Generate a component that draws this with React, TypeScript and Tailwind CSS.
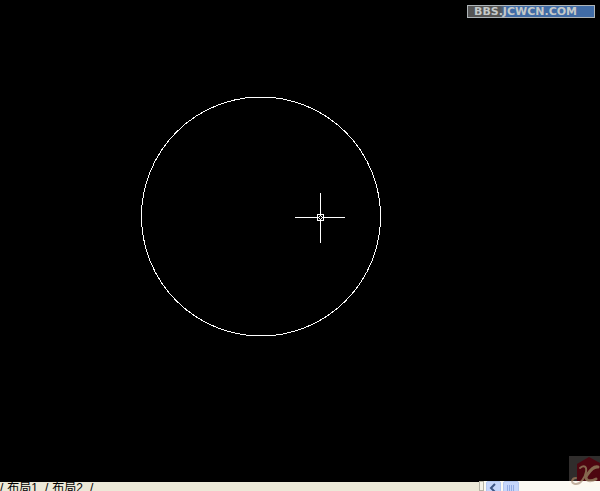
const layouts = ["布局1", "布局2"];

function Watermark() {
  return (
    <svg className="absolute right-0 bottom-1 h-[31px] w-[31px]" viewBox="0 0 31 31" aria-hidden="true">
      <rect width="31" height="25" fill="#302d2c" />
      <path d="M8 8 20 1 31 7V25H8Z" fill="#4d0610" />
      <g fill="none" strokeLinecap="round" stroke="#85684f">
        <path d="M11 12C15 9 18 10 17 16S11 29 6 28 3 22 7 22" strokeWidth="2" />
        <path d="M29 11C24 10 21 15 18 19S19 27 27 23" strokeWidth="3" />
      </g>
      <path d="M0 25H31V31H0Z" fill="#fff9ef" opacity="0.5" />
    </svg>
  );
}

function Drawing() {
  return (
    <svg className="block h-full w-full" role="img" aria-label="Circle with crosshair cursor" shapeRendering="crispEdges" fill="none" stroke="#fff">
      <circle cx="261" cy="216.5" r="119.5" />
      <path d="M320.5 193V243M295 217.5H345" />
      <rect x="317.5" y="214.5" width="6" height="6" fill="#000" />
      <path d="M320 215.5h1M319 216.5h1M321 216.5h1M318 217.5h1M322 217.5h1M319 218.5h1M321 218.5h1M320 219.5h1" />
    </svg>
  );
}

export default function App() {
  return (
    <div className="relative flex h-screen flex-col overflow-hidden bg-black">
      <main className="min-h-0 flex-1">
        <Drawing />
      </main>
      <div className="absolute top-[5px] right-[5px] flex h-[13px] w-32 items-center border border-[#aeb5b8] bg-linear-to-r from-[#555] from-25% to-[#416ca6] to-30% pl-[6px] font-['DejaVu_Sans',sans-serif] text-[11px] leading-none font-bold text-[#c4c9c9]">
        BBS.JCWCN.COM
      </div>
      <footer className="flex h-[10px] shrink-0 bg-[#fbfaf3]">
        <nav className="flex flex-1 border-t border-black bg-[#ece9d8] font-['Liberation_Sans','Noto_Sans_CJK_SC',sans-serif] text-[12px] leading-3 text-black">
          {layouts.map((name) => (
            <button key={name} className="flex h-3 w-[45px] shrink-0 items-start gap-1 whitespace-nowrap">
              <span>/</span>
              <span>{name}</span>
            </button>
          ))}
          <span>/</span>
        </nav>
        <div className="flex w-[121px] gap-[2px]">
          <span className="w-[5px] border border-[#b5b3a5] bg-[#f4f2e8]" />
          <button aria-label="Scroll left" className="h-4 w-[15px] rounded-xs border border-[#b4c8f0] bg-[#c5d6fb]">
            <svg viewBox="0 0 13 14" className="h-[14px] w-[13px]" fill="none" stroke="#3d5685" strokeWidth="2">
              <path d="M8 2 4 6l4 4" />
            </svg>
          </button>
          <button aria-label="Scroll thumb" className="h-4 w-[16px] rounded-xs border border-[#b4c8f0] bg-[#c5d6fb]">
            <svg viewBox="0 0 14 14" className="h-[14px] w-[14px]" stroke="#91ace4">
              <path d="M3.5 3v7M5.5 3v7M7.5 3v7M9.5 3v7" />
            </svg>
          </button>
        </div>
      </footer>
      <Watermark />
    </div>
  );
}
